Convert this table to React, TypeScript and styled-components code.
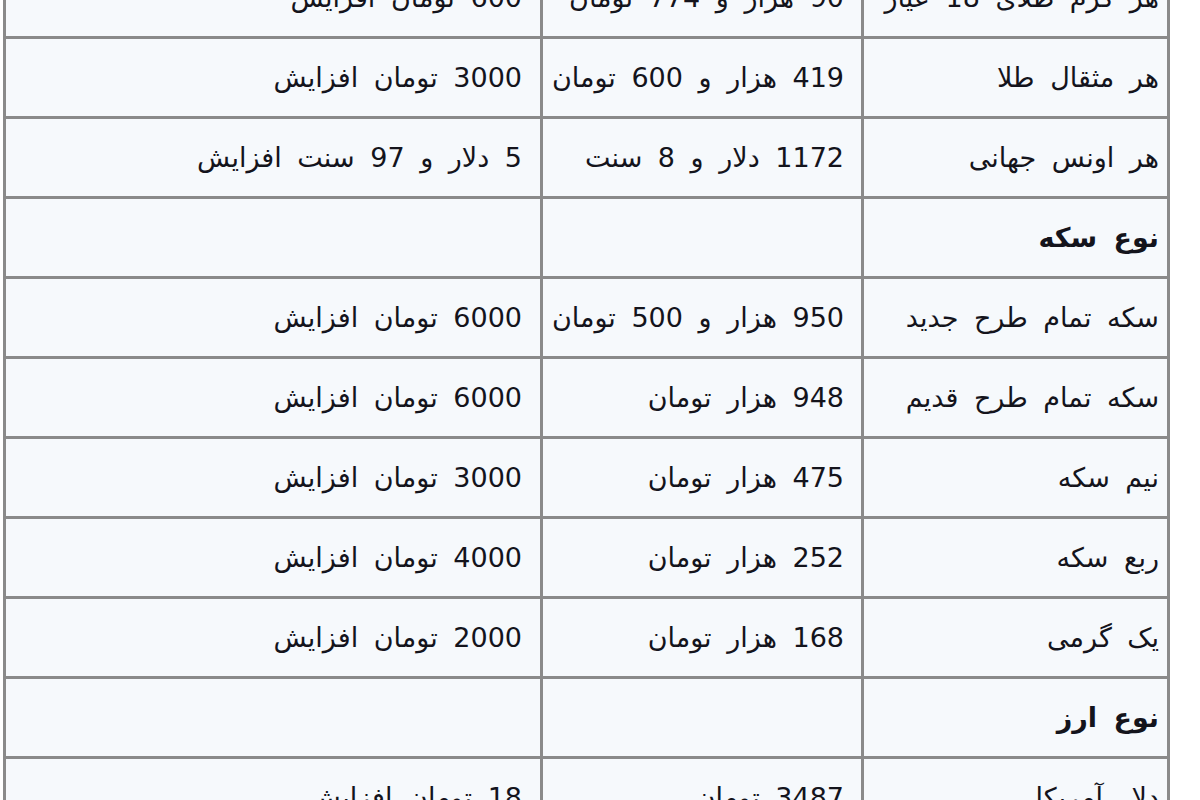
import React from "react";
import styled, { createGlobalStyle } from "styled-components";

const Global = createGlobalStyle`
  html, body { margin: 0; padding: 0; background: #ffffff; overflow: hidden; }
  body { font-family: "DejaVu Sans", Tahoma, sans-serif; }
`;

const Page = styled.div`
  width: 1200px;
  height: 800px;
  overflow: hidden;
  background: #ffffff;
`;

const Table = styled.table`
  direction: rtl;
  border-collapse: collapse;
  table-layout: fixed;
  width: 1167px;
  margin: -44px 0 0 3px;
  background: #f6f9fc;
  font-family: "DejaVu Sans", Tahoma, sans-serif;
  font-size: 27px;
  word-spacing: 7px;
  color: #14141c;
`;

const Col = styled.col<{ $w: number }>`
  width: ${(p) => p.$w}px;
`;

const Cell = styled.td<{ $pad: number; $bold?: boolean }>`
  border: 3px solid #8a8a8a;
  height: 77px;
  padding: 0 ${(p) => p.$pad}px 0 4px;
  text-align: right;
  vertical-align: middle;
  white-space: nowrap;
  overflow: hidden;
  font-weight: ${(p) => (p.$bold ? 700 : 400)};
`;

type Row = { name: string; price?: string; change?: string; bold?: boolean };

const rows: Row[] = [
  { name: "هر گرم طلای 18 عیار", price: "90 هزار و 774 تومان", change: "600 تومان افزایش" },
  { name: "هر مثقال طلا", price: "419 هزار و 600 تومان", change: "3000 تومان افزایش" },
  { name: "هر اونس جهانی", price: "1172 دلار و 8 سنت", change: "5 دلار و 97 سنت افزایش" },
  { name: "نوع سکه", bold: true },
  { name: "سکه تمام طرح جدید", price: "950 هزار و 500 تومان", change: "6000 تومان افزایش" },
  { name: "سکه تمام طرح قدیم", price: "948 هزار تومان", change: "6000 تومان افزایش" },
  { name: "نیم سکه", price: "475 هزار تومان", change: "3000 تومان افزایش" },
  { name: "ربع سکه", price: "252 هزار تومان", change: "4000 تومان افزایش" },
  { name: "یک گرمی", price: "168 هزار تومان", change: "2000 تومان افزایش" },
  { name: "نوع ارز", bold: true },
  { name: "دلار آمریکا", price: "3487 تومان", change: "18 تومان افزایش" },
];

export default function App() {
  return (
    <Page>
      <Global />
      <Table>
        <colgroup>
          <Col $w={306} />
          <Col $w={321} />
          <Col $w={537} />
        </colgroup>
        <tbody>
          {rows.map((r, i) => (
            <tr key={i}>
              <Cell $pad={8} $bold={r.bold}>{r.name}</Cell>
              <Cell $pad={17}>{r.price ?? ""}</Cell>
              <Cell $pad={18}>{r.change ?? ""}</Cell>
            </tr>
          ))}
        </tbody>
      </Table>
    </Page>
  );
}
